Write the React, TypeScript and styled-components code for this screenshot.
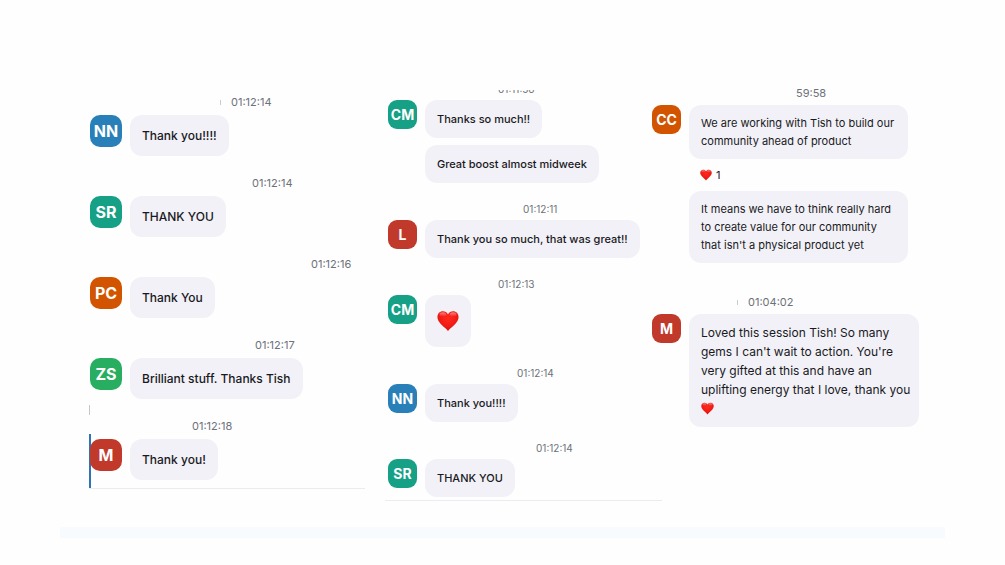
import React, { useId } from "react";
import styled, { createGlobalStyle, css } from "styled-components";

const GlobalStyle = createGlobalStyle`
  *, *::before, *::after { box-sizing: border-box; }
  body {
    margin: 0;
    background: #fefefe;
    color: #191923;
    font-family: Inter, "Liberation Sans", Arial, sans-serif;
  }
`;

type Size = "regular" | "compact";

const Page = styled.main`
  padding: 85px 60px 27px;
`;

const Board = styled.div`
  display: grid;
  grid-template-columns: 296fr 267fr 293fr;
  align-items: start;
  padding-left: 29px;
`;

const Column = styled.section<{ $top: number; $gap: number }>`
  display: flex;
  flex-direction: column;
  gap: ${(p) => p.$gap}px;
  padding-top: ${(p) => p.$top}px;
  min-width: 0;
`;

const Message = styled.article<{ $marked?: boolean }>`
  position: relative;
  ${(p) =>
    p.$marked &&
    css`
      &::before {
        content: "";
        position: absolute;
        left: 0;
        top: -13px;
        width: 1px;
        height: 10px;
        background: #c4c6ca;
      }
    `}
`;

const Header = styled.header<{ $indent: number; $clipped?: boolean }>`
  display: flex;
  align-items: flex-end;
  height: ${(p) => (p.$clipped ? 7 : 16)}px;
  overflow: hidden;
  padding-left: ${(p) => p.$indent}px;
`;

const timeSizes = { small: 10, medium: 11 };

const Time = styled.time<{ $scale: keyof typeof timeSizes }>`
  color: #6d7279;
  font-size: ${(p) => timeSizes[p.$scale]}px;
  line-height: 16px;
`;

const Tick = styled.span`
  width: 1px;
  height: 5px;
  margin: 0 10px 5px -11px;
  background: #c9cbd1;
`;

const Body = styled.div<{ $pad: number; $accent?: boolean }>`
  display: flex;
  align-items: flex-start;
  gap: 8px;
  padding-top: ${(p) => p.$pad}px;
  ${(p) =>
    p.$accent &&
    css`
      border-left: 2px solid #2f74b5;
      padding-bottom: 8px;
      & > :first-child { margin-left: -1px; }
    `}
`;

const Avatar = styled.span<{ $size: Size; $color: string; $inset: number }>`
  display: flex;
  flex: none;
  align-items: center;
  justify-content: center;
  width: ${(p) => (p.$size === "regular" ? 32 : 29)}px;
  height: ${(p) => (p.$size === "regular" ? 32 : 29)}px;
  margin-left: ${(p) => p.$inset}px;
  border-radius: ${(p) => (p.$size === "regular" ? 10 : 9)}px;
  background: ${(p) => p.$color};
  color: #fff;
  font-size: ${(p) => (p.$size === "regular" ? 16 : 14)}px;
  font-weight: 700;
`;

const Stack = styled.div`
  display: flex;
  flex-direction: column;
  align-items: flex-start;
  gap: 7px;
`;

const Bubble = styled.p<{ $size?: Size }>`
  margin: 0;
  padding: 10px 12px;
  border-radius: 12px;
  background: #f2f1f7;
  font-size: ${(p) => (p.$size === "regular" ? 12 : 11)}px;
  font-weight: 500;
  line-height: ${(p) => (p.$size === "regular" ? 21 : 18)}px;
`;

const Paragraph = styled(Bubble)<{ $wide?: boolean }>`
  max-width: ${(p) => (p.$wide ? 230 : 219)}px;
  padding: 9px ${(p) => (p.$wide ? 8 : 12)}px 9px 12px;
  font-size: ${(p) => (p.$wide ? 12 : 11)}px;
  font-weight: 400;
  line-height: ${(p) => (p.$wide ? 19 : 18)}px;
`;

const HeartBubble = styled(Bubble)`
  display: flex;
  align-items: center;
  height: 52px;
`;

const HeartLine = styled.span`
  display: flex;
  align-items: center;
  height: 19px;
`;

const Reaction = styled.div`
  display: flex;
  align-items: center;
  gap: 4px;
  height: 18px;
  padding-left: 11px;
  font-size: 11px;
`;

const Rule = styled.div<{ $top: number; $overhang: number }>`
  height: 1px;
  margin-top: ${(p) => p.$top}px;
  margin-right: ${(p) => p.$overhang}px;
  background: #ececee;
`;

const Band = styled.footer`
  height: 11px;
  margin-top: 26px;
  background: #f7fbfe;
`;

const HeartIcon = styled.svg`
  display: block;
  flex: none;
`;

function Heart({ size }: { size: number }) {
  const id = useId();
  return (
    <HeartIcon width={size} height={size} viewBox="0 0 24 24" role="img" aria-label="Red heart">
      <defs>
        <radialGradient id={id} cx="50%" cy="35%" r="70%">
          <stop offset="0" stopColor="#ff2a1c" />
          <stop offset="0.6" stopColor="#f01a14" />
          <stop offset="1" stopColor="#c01318" />
        </radialGradient>
        <linearGradient id={`${id}-shine`} x1="0" y1="0" x2="0" y2="1">
          <stop offset="0" stopColor="#fff" stopOpacity="0.45" />
          <stop offset="1" stopColor="#fff" stopOpacity="0" />
        </linearGradient>
      </defs>
      <path
        d="M12 23C11.400 22.300 10.600 21.300 9.200 20C6.500 17.500 3.600 15.200 1.900 12.200C.9 10.500 .5 9 .5 7.500C.5 3.900 3 1.300 6.400 1.300C8.900 1.300 10.900 2.600 12 4.800C13.100 2.600 15.100 1.300 17.600 1.300C21 1.300 23.500 3.900 23.500 7.500C23.500 9 23.100 10.500 22.100 12.200C20.400 15.200 17.500 17.500 14.800 20C13.400 21.300 12.600 22.300 12 23Z"
        fill={`url(#${id})`}
      />
      <ellipse cx="6.300" cy="4.900" rx="3.600" ry="2.400" fill={`url(#${id}-shine)`} />
      <ellipse cx="17.700" cy="4.900" rx="3.600" ry="2.400" fill={`url(#${id}-shine)`} />
    </HeartIcon>
  );
}

interface EntryProps {
  initials: string;
  color: string;
  time: string;
  timeScale?: keyof typeof timeSizes;
  indent: number;
  size?: Size;
  pad: number;
  inset?: number;
  tick?: boolean;
  clipped?: boolean;
  marked?: boolean;
  children: React.ReactNode;
}

function Entry({
  initials, color, time, timeScale = "medium", indent, size = "compact", pad, inset = 1,
  tick, clipped, marked, children,
}: EntryProps) {
  return (
    <Message $marked={marked}>
      <Header $indent={indent} $clipped={clipped}>
        {tick && <Tick />}
        <Time $scale={timeScale}>{time}</Time>
      </Header>
      <Body $pad={pad} $accent={marked}>
        <Avatar $size={size} $color={color} $inset={inset}>{initials}</Avatar>
        <Stack>{children}</Stack>
      </Body>
    </Message>
  );
}

const blue = "#2980b9";
const teal = "#16a085";
const orange = "#d35400";
const green = "#27ae60";
const red = "#c0392b";

const thanks = [
  { initials: "NN", color: blue, time: "01:12:14", indent: 142, text: "Thank you!!!!", tick: true },
  { initials: "SR", color: teal, time: "01:12:14", indent: 163, text: "THANK YOU" },
  { initials: "PC", color: orange, time: "01:12:16", indent: 222, text: "Thank You" },
  { initials: "ZS", color: green, time: "01:12:17", indent: 166, text: "Brilliant stuff. Thanks Tish" },
  { initials: "M", color: red, time: "01:12:18", indent: 103, text: "Thank you!", marked: true },
];

const middle = { timeScale: "small", pad: 3, inset: 3 } as const;

export default function App() {
  return (
    <>
      <GlobalStyle />
      <Page>
        <Board>
          <div>
            <Column $top={9} $gap={19}>
              {thanks.map(({ text, ...entry }) => (
                <Entry key={entry.initials} {...entry} size="regular" pad={5}>
                  <Bubble $size="regular">{text}</Bubble>
                </Entry>
              ))}
            </Column>
            <Rule $top={0} $overhang={20} />
          </div>

          <div>
            <Column $top={5} $gap={18}>
              <Entry {...middle} initials="CM" color={teal} time="01:11:56" indent={113} clipped>
                <Bubble>Thanks so much!!</Bubble>
                <Bubble>Great boost almost midweek</Bubble>
              </Entry>
              <Entry {...middle} initials="L" color={red} time="01:12:11" indent={138}>
                <Bubble>Thank you so much, that was great!!</Bubble>
              </Entry>
              <Entry {...middle} initials="CM" color={teal} time="01:12:13" indent={113}>
                <HeartBubble><Heart size={22} /></HeartBubble>
              </Entry>
              <Entry {...middle} initials="NN" color={blue} time="01:12:14" indent={132}>
                <Bubble>Thank you!!!!</Bubble>
              </Entry>
              <Entry {...middle} initials="SR" color={teal} time="01:12:14" indent={151}>
                <Bubble>THANK YOU</Bubble>
              </Entry>
            </Column>
            <Rule $top={3} $overhang={-10} />
          </div>

          <Column $top={0} $gap={31}>
            <Entry initials="CC" color={orange} time="59:58" indent={144} pad={4} inset={0}>
              <Paragraph>We are working with Tish to build our community ahead of product</Paragraph>
              <Reaction><Heart size={12} /> 1</Reaction>
              <Paragraph>
                It means we have to think really hard to create value for our community that isn't a
                physical product yet
              </Paragraph>
            </Entry>
            <Entry initials="M" color={red} time="01:04:02" indent={96} pad={4} inset={0} tick>
              <Paragraph $wide>
                Loved this session Tish! So many gems I can't wait to action. You're very gifted at
                this and have an uplifting energy that I love, thank you
                <HeartLine><Heart size={13} /></HeartLine>
              </Paragraph>
            </Entry>
          </Column>
        </Board>
        <Band />
      </Page>
    </>
  );
}
